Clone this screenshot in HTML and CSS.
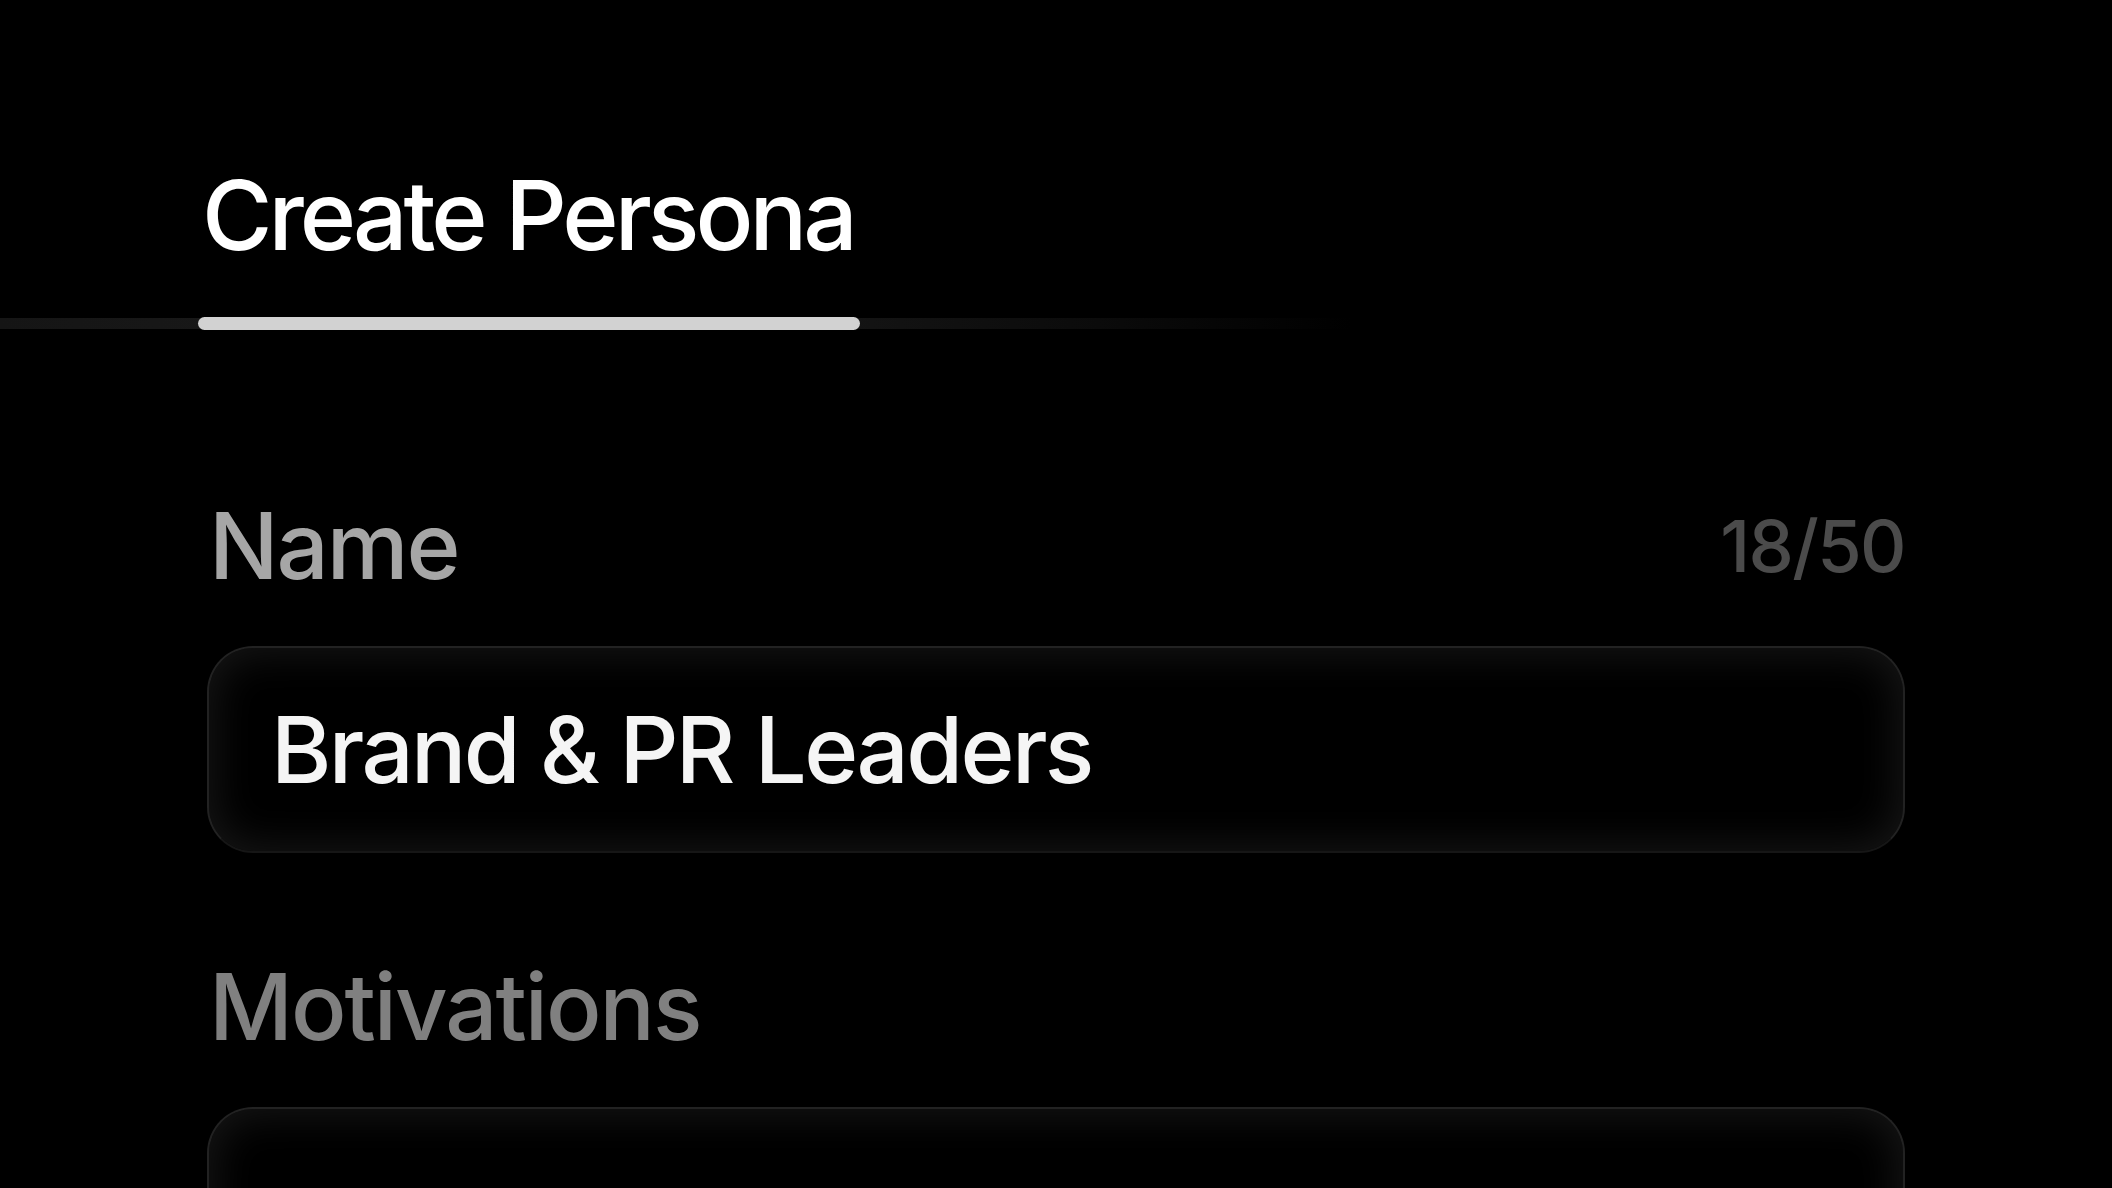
FILE: index.html
```html
<!DOCTYPE html>
<html lang="en">
<head>
<meta charset="utf-8">
<title>Create Persona</title>
<link rel="stylesheet" href="styles.css">
</head>
<body>
<div class="screen">
  <nav class="tabbar">
    <div class="tab tab--active">
      <span class="tab-label">Create Persona</span>
      <span class="tab-indicator"></span>
    </div>
  </nav>
  <main class="form">
    <section class="field">
      <div class="field-head">
        <label class="field-label field-label--focused">Name</label>
        <span class="field-count">18/50</span>
      </div>
      <div class="field-box">
        <span class="field-value">Brand &amp; PR Leaders</span>
      </div>
    </section>
    <section class="field">
      <div class="field-head">
        <label class="field-label">Motivations</label>
      </div>
      <div class="field-box field-box--tall"></div>
    </section>
  </main>
</div>
</body>
</html>
```

FILE: styles.css
```css
* { box-sizing: border-box; }
html, body {
  margin: 0;
  padding: 0;
  background: #000;
  height: 100%;
  overflow: hidden;
}
body {
  font-family: Inter, "Noto Sans", "Liberation Sans", sans-serif;
  color: #fff;
}
.screen {
  display: flex;
  flex-direction: column;
  height: 100%;
  overflow: hidden;
  padding-top: 167px;
}
.tabbar {
  display: flex;
  padding-left: 198px;
  background-image: linear-gradient(to right, #151515 0%, #1b1b1b 22%, #141414 40%, #0b0b0b 52%, #000 64%);
  background-repeat: no-repeat;
  background-size: 100% 11px;
  background-position: 0 calc(100% - 1px);
}
.tab {
  display: flex;
  flex-direction: column;
  gap: 54px;
}
.tab-label {
  font-size: 96px;
  font-weight: 500;
  line-height: 1;
  letter-spacing: -4px;
  padding: 0 6px 0 4px;
  color: #fff;
}
.tab-indicator {
  height: 13px;
  border-radius: 7px;
  background: #d2d2d2;
}
.form {
  display: flex;
  flex-direction: column;
  gap: 108px;
  padding: 170px 207px 0;
}
.field {
  display: flex;
  flex-direction: column;
  gap: 54px;
  flex-shrink: 0;
}
.field-head {
  display: flex;
  justify-content: space-between;
  align-items: center;
  padding-left: 2px;
}
.field-label {
  font-size: 92px;
  font-weight: 500;
  line-height: 1;
  letter-spacing: -2px;
  color: #808080;
}
.field-label--focused { color: #a6a6a6; }
.field-count {
  font-size: 72px;
  font-weight: 500;
  line-height: 1;
  letter-spacing: -1.6px;
  color: #4b4b4b;
}
.field-box {
  height: 207px;
  flex-shrink: 0;
  border-radius: 46px;
  background: #000;
  border: 2px solid #222;
  border-bottom-color: #161616;
  box-shadow: inset 0 0 40px 6px rgba(40, 40, 40, 0.55);
  display: flex;
  align-items: center;
  padding-left: 62px;
}
.field-box--tall { height: 260px; }
.field-value {
  font-size: 92px;
  font-weight: 500;
  line-height: 1;
  letter-spacing: -2.6px;
  color: #f5f5f5;
}
```
